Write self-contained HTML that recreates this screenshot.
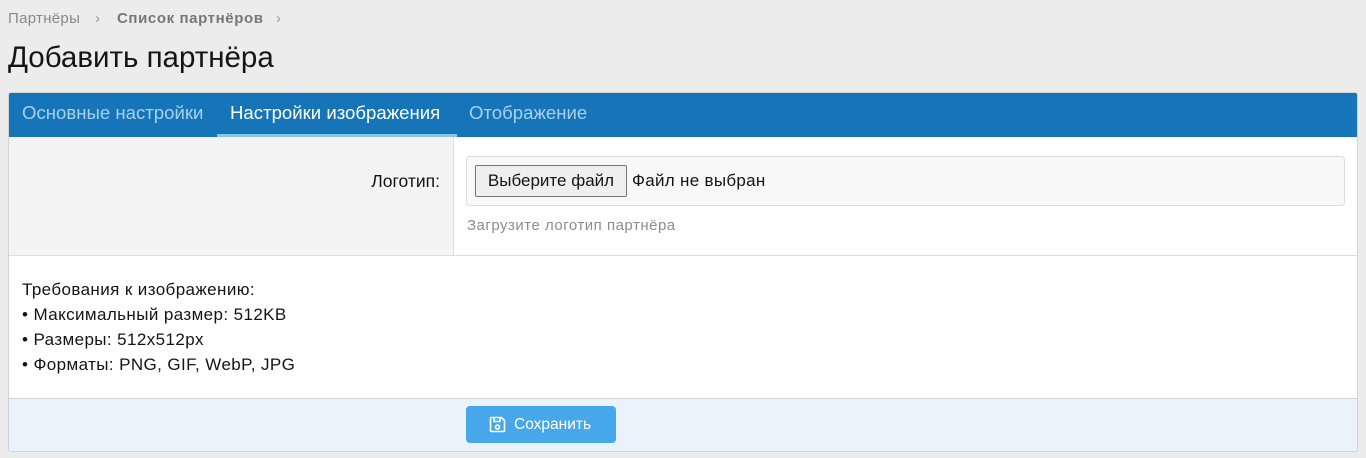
<!DOCTYPE html>
<html><head><meta charset="utf-8"><style>
*{box-sizing:border-box;margin:0;padding:0}
body{width:1366px;height:458px;background:#ececec;font-family:"Liberation Sans","Noto Sans CJK SC",sans-serif;color:#141414;position:relative;overflow:hidden}
.bc{position:absolute;left:8px;top:10px;font-size:15px;color:#888;letter-spacing:.3px}
.bc b{color:#777;position:absolute;left:109px;top:0;white-space:nowrap;letter-spacing:.6px}
.bc .s1{position:absolute;left:87px;color:#999}
.bc .s2{position:absolute;left:268px;color:#999}
h1{position:absolute;left:8px;top:41px;font-size:29.5px;font-weight:normal;color:#141414}
.box{position:absolute;left:8px;top:92px;width:1350px;height:360px;border:1px solid #d3d3d3;background:#fff;border-radius:3px;overflow:hidden}
.tabs{height:44px;background:#1575b8;position:relative}
.tab{position:absolute;top:0;height:44px;line-height:40px;font-size:18.6px;color:#a9d0ef;padding:0 13px;white-space:nowrap}
.tab.a{color:#fff;border-bottom:3px solid #8ac4ec}
.row{position:absolute;top:44px;left:0;right:0;height:119px;border-bottom:1px solid #ddd}
.lab{position:absolute;left:0;top:0;width:445px;height:118px;background:#f4f4f4;border-right:1px solid #e0e0e0;text-align:right;padding-right:13px;padding-top:34px;font-size:17.5px}
.inp{position:absolute;left:457px;top:19px;width:879px;height:50px;border:1px solid #ddd;border-radius:4px;background:#f8f8f8}
.btn{position:absolute;left:8px;top:8px;width:152px;height:32px;border:1px solid #767676;border-radius:2px;background:#efefef;font-size:17px;line-height:30px;text-align:center;white-space:nowrap}
.nf{position:absolute;left:165px;top:14px;font-size:17px;letter-spacing:.3px}
.hint{position:absolute;left:458px;top:80px;font-size:15px;color:#8c8c8c;letter-spacing:.5px}
.req{position:absolute;left:13px;top:184px;font-size:17px;line-height:25px;letter-spacing:.4px}
.foot{position:absolute;left:0;right:0;bottom:0;height:53px;background:#eaf3fb;border-top:1px solid #d3d3d3}
.save{position:absolute;left:457px;top:7px;width:150px;height:37px;background:#47a7eb;border-radius:4px;color:#fff;font-size:15.5px;line-height:37px;padding-left:48px}
.save svg{position:absolute;left:23px;top:10px}
</style></head><body>
<div class="bc">Партнёры <span class="s1">›</span><b>Список партнёров</b><span class="s2">›</span></div>
<h1>Добавить партнёра</h1>
<div class="box">
<div class="tabs">
<div class="tab" style="left:0">Основные настройки</div>
<div class="tab a" style="left:208px;width:240px">Настройки изображения</div>
<div class="tab" style="left:447px">Отображение</div>
</div>
<div class="row">
<div class="lab">Логотип:</div>
<div class="inp"><div class="btn">Выберите файл</div><div class="nf">Файл не выбран</div></div>
<div class="hint">Загрузите логотип партнёра</div>
</div>
<div class="req">Требования к изображению:<br>• Максимальный размер: 512KB<br>• Размеры: 512x512px<br>• Форматы: PNG, GIF, WebP, JPG</div>
<div class="foot"><div class="save"><svg width="17" height="17" viewBox="0 0 17 17" fill="none" stroke="#fff" stroke-width="1.6"><path d="M2.5 1.5h10l3 3v10a1 1 0 0 1-1 1h-12a1 1 0 0 1-1-1v-12a1 1 0 0 1 1-1z"/><path d="M5 1.5v4h6v-4"/><circle cx="8.5" cy="11" r="2"/></svg>Сохранить</div></div>
</div>
</body></html>
